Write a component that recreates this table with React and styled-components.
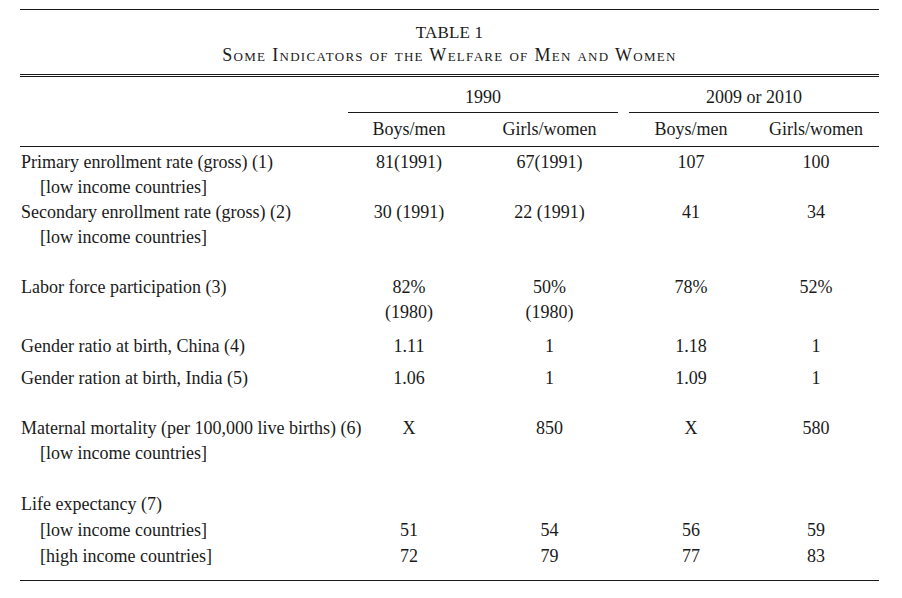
import React from "react";
import styled, { createGlobalStyle } from "styled-components";

const GlobalStyle = createGlobalStyle`
	html, body {
		margin: 0;
		padding: 0;
		background: #ffffff;
	}
	body {
		font-family: "Liberation Serif", "Times New Roman", serif;
		color: #1a1a1a;
	}
`;

const COLUMNS = "328px 122px 159px 124px 126px";

const Page = styled.div`
	width: 902px;
	height: 598px;
	padding: 9px 0 0 20px;
	box-sizing: border-box;
	overflow: hidden;
`;

const TableBox = styled.div`
	width: 859px;
	border-top: 1px solid #1a1a1a;
	font-size: 18px;
`;

const Caption = styled.div`
	text-align: center;
	padding-top: 12px;
	padding-bottom: 8px;
`;

const CaptionTitle = styled.div`
	font-size: 17px;
	line-height: 22px;
	letter-spacing: 0.2px;
`;

const CaptionSubtitle = styled.div`
	font-size: 18px;
	line-height: 22px;
	font-variant: small-caps;
	letter-spacing: 1.3px;
`;

const DoubleRule = styled.div`
	height: 1px;
	border-top: 1px solid #1a1a1a;
	border-bottom: 1px solid #1a1a1a;
`;

const Rule = styled.div`
	height: 0;
	border-top: 1px solid #1a1a1a;
	margin-top: ${({ $gap }) => $gap || 0}px;
`;

const Row = styled.div`
	display: grid;
	grid-template-columns: ${COLUMNS};
	margin-top: ${({ $gap }) => $gap || 0}px;
	line-height: 25px;
`;

const GroupHead = styled.div`
	grid-column: ${({ $span }) => $span};
	margin-right: ${({ $trim }) => $trim || 0}px;
	text-align: center;
	padding-bottom: 2px;
	border-bottom: 1px solid #1a1a1a;
`;

const ColHead = styled.div`
	text-align: center;
	padding-top: 4px;
	padding-bottom: 4px;
`;

const LabelCell = styled.div`
	padding-left: 1px;
	white-space: nowrap;
`;

const ValueCell = styled.div`
	text-align: center;
	white-space: nowrap;
`;

const Line = styled.div`
	height: ${({ $tall }) => ($tall ? 26 : 25)}px;
	padding-left: ${({ $indent }) => ($indent ? 19 : 0)}px;
`;

const rows = [
	{
		gap: 3,
		lines: ["Primary enrollment rate (gross) (1)", "[low income countries]"],
		values: [["81(1991)"], ["67(1991)"], ["107"], ["100"]],
	},
	{
		gap: 0,
		lines: ["Secondary enrollment rate (gross) (2)", "[low income countries]"],
		values: [["30 (1991)"], ["22 (1991)"], ["41"], ["34"]],
	},
	{
		gap: 25,
		lines: ["Labor force participation (3)"],
		values: [["82%", "(1980)"], ["50%", "(1980)"], ["78%"], ["52%"]],
	},
	{
		gap: 9,
		lines: ["Gender ratio at birth, China (4)"],
		values: [["1.11"], ["1"], ["1.18"], ["1"]],
	},
	{
		gap: 7,
		lines: ["Gender ration at birth, India (5)"],
		values: [["1.06"], ["1"], ["1.09"], ["1"]],
	},
	{
		gap: 25,
		lines: [
			"Maternal mortality (per 100,000 live births) (6)",
			"[low income countries]",
		],
		values: [["X"], ["850"], ["X"], ["580"]],
	},
	{
		gap: 26,
		tall: true,
		lines: [
			"Life expectancy (7)",
			"[low income countries]",
			"[high income countries]",
		],
		values: [
			["", "51", "72"],
			["", "54", "79"],
			["", "56", "77"],
			["", "59", "83"],
		],
	},
];

const headers = ["Boys/men", "Girls/women", "Boys/men", "Girls/women"];

function App() {
	return (
		<>
			<GlobalStyle />
			<Page>
				<TableBox>
					<Caption>
						<CaptionTitle>TABLE 1</CaptionTitle>
						<CaptionSubtitle>
							Some Indicators of the Welfare of Men and Women
						</CaptionSubtitle>
					</Caption>
					<DoubleRule />
					<Row $gap={8}>
						<GroupHead $span="2 / 4" $trim={11}>
							1990
						</GroupHead>
						<GroupHead $span="4 / 6">2009 or 2010</GroupHead>
					</Row>
					<Row>
						<div />
						{headers.map((h, i) => (
							<ColHead key={i}>{h}</ColHead>
						))}
					</Row>
					<Rule />
					{rows.map((row, r) => (
						<Row key={r} $gap={row.gap}>
							<LabelCell>
								{row.lines.map((text, i) => (
									<Line key={i} $indent={i > 0} $tall={row.tall}>
										{text}
									</Line>
								))}
							</LabelCell>
							{row.values.map((cell, c) => (
								<ValueCell key={c}>
									{cell.map((v, i) => (
										<Line key={i} $tall={row.tall}>
											{v}
										</Line>
									))}
								</ValueCell>
							))}
						</Row>
					))}
					<Rule $gap={10} />
				</TableBox>
			</Page>
		</>
	);
}

export default App;
